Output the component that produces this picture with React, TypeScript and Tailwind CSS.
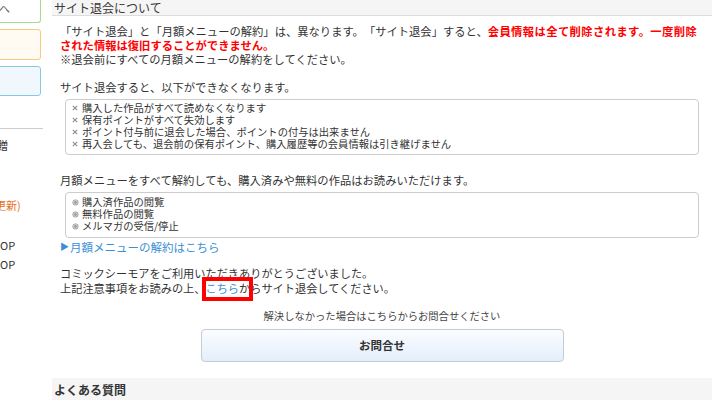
import React from "react";

const font = "font-['Noto_Sans_CJK_JP','Noto_Sans',sans-serif]";

function Sidebar() {
  return (
    <div className="w-[44px] shrink-0 overflow-hidden flex flex-col text-[11px] leading-[14px] text-[#333]">
      <div className="-ml-[10px] w-[51px] h-[23px] border-x border-b border-[#a8da8e] rounded-b-[3px] bg-white">
        <div className="pl-[10px] -ml-[2px] pt-[1px] text-[#666]">へ</div>
      </div>
      <div className="-ml-[10px] w-[51px] h-[31px] mt-[6px] border border-[#fbc87e] rounded-[3px] bg-[#fffaf2]" />
      <div className="-ml-[10px] w-[51px] h-[30px] mt-[6px] border border-[#88c8e4] rounded-[3px] bg-[#f1f8fd]" />
      <div className="w-[43px] h-px mt-[32px] bg-[#cccccc]" />
      <div className="mt-[9px] -ml-[3px] whitespace-nowrap">贈</div>
      <div className="mt-[46px] -ml-[5px] whitespace-nowrap text-[#e8701c]">更新)</div>
      <div className="mt-[26px] whitespace-nowrap">OP</div>
      <div className="mt-[5px] whitespace-nowrap">OP</div>
    </div>
  );
}

function Cross() {
  return (
    <span className="w-[11px] h-[12px] shrink-0 flex items-center">
      <svg width="6" height="6" viewBox="0 0 6 6" className="ml-[1px]">
        <path d="M0.8 0.8 L5.2 5.2 M5.2 0.8 L0.8 5.2" stroke="#8c8c8c" strokeWidth="1.1" fill="none" />
      </svg>
    </span>
  );
}

function Double() {
  return (
    <span className="w-[11px] h-[12px] shrink-0 flex items-center">
      <svg width="7" height="7" viewBox="0 0 7 7" className="ml-[1px]">
        <circle cx="3.5" cy="3.5" r="3" fill="#9a9a9a" />
        <circle cx="3.5" cy="3.5" r="1.9" fill="none" stroke="#e6e6e6" strokeWidth="0.8" />
      </svg>
    </span>
  );
}

export default function App() {
  const lost = [
    "購入した作品がすべて読めなくなります",
    "保有ポイントがすべて失効します",
    "ポイント付与前に退会した場合、ポイントの付与は出来ません",
    "再入会しても、退会前の保有ポイント、購入履歴等の会員情報は引き継げません",
  ];
  const kept = ["購入済作品の閲覧", "無料作品の閲覧", "メルマガの受信/停止"];
  return (
    <div
      className={
        "flex w-[720px] h-[400px] overflow-hidden bg-white text-[#333] gap-[8px] [text-spacing-trim:space-all] " +
        font
      }
    >
      <Sidebar />
      <div className="w-[660px] shrink-0 flex flex-col">
        <div className="h-[22px] bg-[#f5f5f5] border-b border-[#dddddd] pl-[2px] text-[12px] leading-[15px] text-[#3a3a3a]">
          サイト退会について
        </div>
        <div className="px-[8px] flex flex-col">
          <p className="mt-[8px] text-[11.3px] leading-[14px] whitespace-nowrap">
            「サイト退会」と「月額メニューの解約」は、異なります。「サイト退会」すると、
            <span className="font-bold text-[#ff0000] tracking-[0.4px]">会員情報は全て削除されます。一度削除</span>
            <br />
            <span className="font-bold text-[#ff0000]">された情報は復旧することができません。</span>
            <br />
            ※退会前にすべての月額メニューの解約をしてください。
          </p>
          <p className="mt-[14px] text-[11.3px] leading-[14px]">サイト退会すると、以下ができなくなります。</p>
          <div className="mt-[5px] mx-[5px] border border-[#cccccc] rounded-[4px] pt-[2px] pb-[4px] pl-[5px] text-[10.3px] leading-[12px] flex flex-col">
            {lost.map((t) => (
              <div key={t} className="h-[12px] flex items-center whitespace-nowrap">
                <Cross />
                <span className="leading-[12px]">{t}</span>
              </div>
            ))}
          </div>
          <p className="mt-[18px] text-[11.3px] leading-[14px]">
            月額メニューをすべて解約しても、購入済みや無料の作品はお読みいただけます。
          </p>
          <div className="mt-[5px] mx-[5px] border border-[#cccccc] rounded-[4px] pt-[3px] pb-[5px] pl-[5px] text-[10.3px] leading-[12px] flex flex-col">
            {kept.map((t) => (
              <div key={t} className="h-[12px] flex items-center whitespace-nowrap">
                <Double />
                <span className="leading-[12px]">{t}</span>
              </div>
            ))}
          </div>
          <div className="mt-[2px] h-[14px] flex items-center text-[11.5px] leading-[14px] text-[#3a8fd6]">
            <span className="text-[9px] mr-[1px]">▶</span>
            <span>月額メニューの解約はこちら</span>
          </div>
          <p className="mt-[12px] text-[11.2px] leading-[15px]">
            コミックシーモアをご利用いただきありがとうございました。
            <br />
            上記注意事項をお読みの上、
            <span className="relative inline-block text-[#3a8fd6]">
              こちら
              <span className="absolute left-[-3px] top-[-4px] w-[51px] h-[24px] border-[4px] border-[#ff0000]" />
            </span>
            からサイト退会してください。
          </p>
          <p className="mt-[13px] text-[10.3px] leading-[14px] text-center text-[#444]">
            解決しなかった場合はこちらからお問合せください
          </p>
          <button className="mt-[6px] mx-auto w-[363px] h-[33px] rounded-[4px] border border-[#c6cbd3] bg-linear-to-b from-[#fbfdff] to-[#e3eefc] text-[11.5px] font-bold text-[#333]">
            お問合せ
          </button>
        </div>
        <div className="mt-[16px] h-[2px] bg-[#ff9900]" />
        <div className="h-[24px] bg-[#f5f5f5] pl-[2px] text-[12px] leading-[24px] font-bold text-[#333]">
          よくある質問
        </div>
      </div>
    </div>
  );
}
